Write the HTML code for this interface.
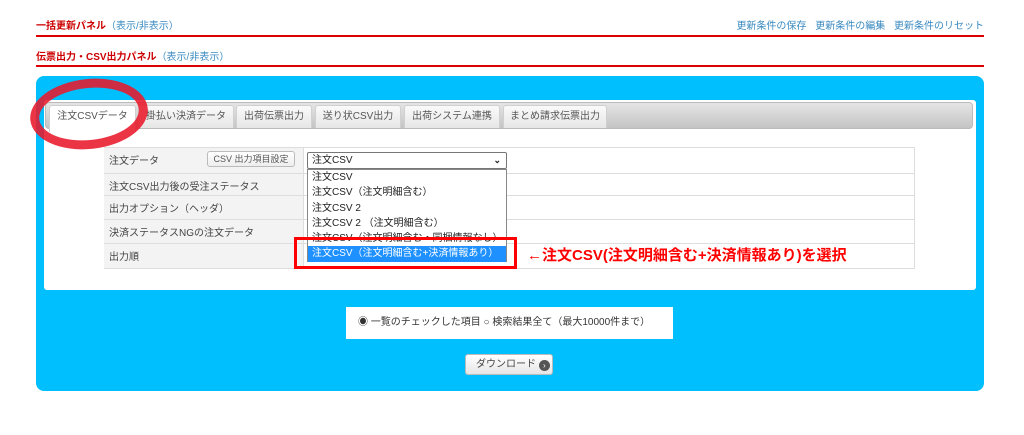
<!DOCTYPE html>
<html><head><meta charset="utf-8"><style>
*{margin:0;padding:0;box-sizing:border-box}
body{width:1024px;height:435px;background:#fff;font-family:"Liberation Sans","Noto Sans CJK JP",sans-serif;font-size:10px;color:#333;position:relative;overflow:hidden}
.a{position:absolute}
.h{color:#c00;font-weight:bold;font-size:10px}
.h span{color:#3a8ac0;font-weight:normal}
.line{height:2px;background:#d00;left:36px;width:948px}
.tab{position:absolute;top:105px;height:23px;background:linear-gradient(#fafafa,#e6e6e6);border:1px solid #d0d0d0;border-bottom:none;border-radius:3px 3px 0 0;color:#555;font-size:10px;line-height:21px;text-align:center}
.row{position:absolute;left:104px;width:811px;border-top:1px solid #ddd}
.lab{position:absolute;left:0;top:0;bottom:0;width:200px;background:#f3f3f3;border-right:1px solid #ddd;padding:4px 5px;color:#444}
.opt{height:15.3px;line-height:15px;padding-left:4px;font-size:10px;color:#222}
</style></head><body>
<div class="a h" style="left:36px;top:17px">一括更新パネル<span>（表示/非表示）</span></div>
<div class="a" style="right:40px;top:17px;color:#3a8ac0;word-spacing:6px">更新条件の保存 更新条件の編集 更新条件のリセット</div>
<div class="a line" style="top:35px"></div>
<div class="a h" style="left:36px;top:48px">伝票出力・CSV出力パネル<span>（表示/非表示）</span></div>
<div class="a line" style="top:65px"></div>
<div class="a" style="left:36px;top:76px;width:948px;height:315px;background:#00bfff;border-radius:8px"></div>
<div class="a" style="left:44px;top:100px;width:932px;height:190px;background:#fff;border-radius:3px"></div>
<div class="a" style="left:45px;top:102px;width:928px;height:27px;background:linear-gradient(#e5e5e5,#c4c4c4);border:1px solid #bbb;border-radius:4px"></div>
<div class="tab" style="left:49px;width:87px;background:#fff;height:27px">注文CSVデータ</div>
<div class="tab" style="left:138px;width:96px">掛払い決済データ</div>
<div class="tab" style="left:236px;width:76px">出荷伝票出力</div>
<div class="tab" style="left:315px;width:86px">送り状CSV出力</div>
<div class="tab" style="left:404px;width:96px">出荷システム連携</div>
<div class="tab" style="left:503px;width:104px">まとめ請求伝票出力</div>
<div class="a" style="left:104px;top:147px;width:811px;height:122px;border:1px solid #ddd"></div>
<div class="row" style="top:147px;height:26px"><div class="lab">注文データ</div></div>
<div class="row" style="top:173px;height:22px"><div class="lab">注文CSV出力後の受注ステータス</div></div>
<div class="row" style="top:195px;height:24px"><div class="lab">出力オプション（ヘッダ）</div></div>
<div class="row" style="top:219px;height:24px"><div class="lab">決済ステータスNGの注文データ</div></div>
<div class="row" style="top:243px;height:26px;border-bottom:1px solid #ddd"><div class="lab">出力順</div></div>
<div class="a" style="left:207px;top:151px;width:88px;height:16px;border:1px solid #bbb;border-radius:3px;background:linear-gradient(#fff,#eee);font-size:9px;text-align:center;line-height:14px;color:#555">CSV 出力項目設定</div>
<div class="a" style="left:307px;top:152px;width:200px;height:17px;border:1px solid #777;border-radius:2px;background:#fff;padding-left:4px;line-height:15px;color:#222">注文CSV<span style="position:absolute;right:5px;font-size:9px;font-weight:bold">&#x2304;</span></div>
<div class="a" style="left:307px;top:169px;width:200px;height:93px;border:1px solid #888;background:#fff">
<div class="opt">注文CSV</div><div class="opt">注文CSV（注文明細含む）</div><div class="opt">注文CSV 2</div><div class="opt">注文CSV 2 （注文明細含む）</div><div class="opt">注文CSV（注文明細含む・同梱情報なし）</div><div class="opt" style="background:#1e90ff;color:#fff">注文CSV（注文明細含む+決済情報あり）</div></div>
<div class="a" style="left:294px;top:237px;width:223px;height:32px;border:3px solid #f00"></div>
<div class="a" style="left:527px;top:244px;color:#f00;font-size:15px;font-weight:bold">←注文CSV(注文明細含む+決済情報あり)を選択</div>
<div class="a" style="left:30px;top:79px;width:118px;height:70px;border:9px solid #e8182a;border-radius:50%;transform:rotate(-6deg);opacity:.88"></div>
<div class="a" style="left:346px;top:307px;width:327px;height:32px;background:#fff;line-height:32px;padding-left:12px;color:#333">◉ 一覧のチェックした項目 ○ 検索結果全て（最大10000件まで）</div>
<div class="a" style="left:465px;top:354px;width:88px;height:21px;border:1px solid #bbb;border-radius:3px;background:linear-gradient(#fff,#e6e6e6);line-height:19px;padding-left:10px;color:#444">ダウンロード <span style="display:inline-block;width:11px;height:11px;border-radius:50%;background:#555;color:#fff;font-size:8px;line-height:11px;text-align:center;vertical-align:-1px">›</span></div>
</body></html>
